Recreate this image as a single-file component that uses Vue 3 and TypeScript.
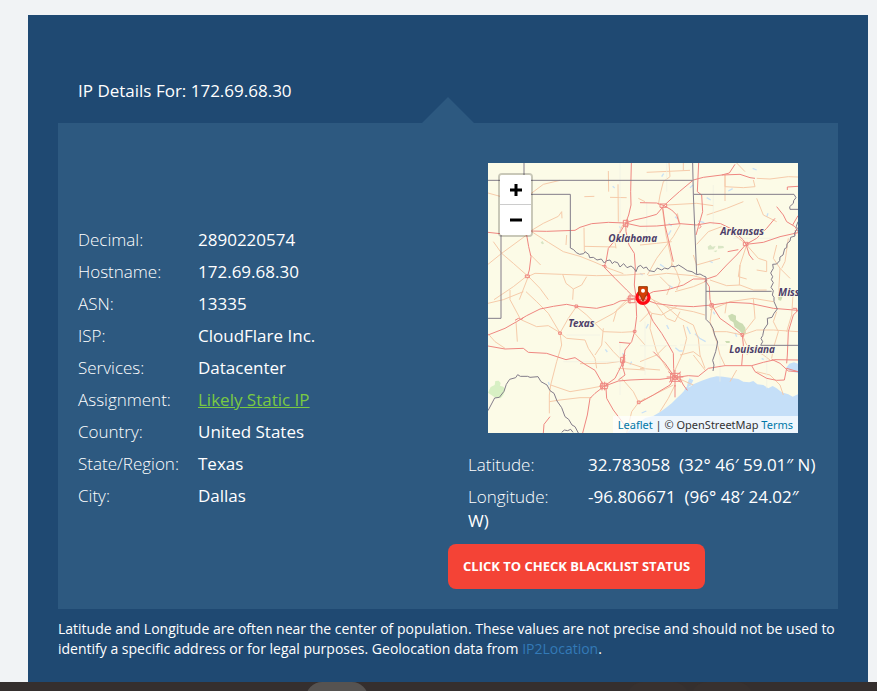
<script setup lang="ts">
import { ref } from 'vue'

interface Detail {
  label: string
  value: string
  href?: string
}

const ip = '172.69.68.30'

const details: Detail[] = [
  { label: 'Decimal', value: '2890220574' },
  { label: 'Hostname', value: ip },
  { label: 'ASN', value: '13335' },
  { label: 'ISP', value: 'CloudFlare Inc.' },
  { label: 'Services', value: 'Datacenter' },
  { label: 'Assignment', value: 'Likely Static IP', href: '#static-ip' },
  { label: 'Country', value: 'United States' },
  { label: 'State/Region', value: 'Texas' },
  { label: 'City', value: 'Dallas' },
]

const position: Detail[] = [
  { label: 'Latitude', value: '32.783058\u00a0 (32° 46′ 59.01″ N)' },
  { label: 'Longitude', value: '-96.806671\u00a0 (96° 48′ 24.02″ W)' },
]

const zoom = ref(5)
</script>

<template>
  <main class="page">
    <section class="card">
      <h1 class="title">IP Details For: {{ ip }}</h1>

      <div class="panel">
        <div class="col facts">
          <dl class="list">
            <div v-for="d in details" :key="d.label" class="row">
              <dt>{{ d.label }}:</dt>
              <dd>
                <a v-if="d.href" :href="d.href" class="static">{{ d.value }}</a>
                <template v-else>{{ d.value }}</template>
              </dd>
            </div>
          </dl>
        </div>

        <div class="col place">
          <div class="map">
            <svg class="tiles" viewBox="24 24 930 810" preserveAspectRatio="xMidYMid slice" aria-hidden="true">
              <rect x="24" y="24" width="930" height="810" fill="#fcfbe7" />

              <!-- Gulf, lakes and parks -->
              <path class="water" d="M480 800 L496 789 520 783 545 768 560 757 575 745 590 730 603 718 612 708 618 696 628 697 640 688 665 677 690 668 710 664 730 665 750 668 775 672 790 680 808 682 820 678 832 688 850 690 865 700 878 693 890 700 905 712 925 718 938 725 954 718 V834 H440 Z" />
              <path class="water" d="M918 640 l10-14 14-4 12 4 v28 l-18-4 z M628 670 l12 6 -8 16 -12 6 4-18 z" />
              <path class="lake" d="M376 583l6 8 M427 595l8 5 M455 620l-5 9 M586 578l12 10 10 0 M645 536l14 14 18 10 M621 515l10 22 M505 507l-7 13 M560 510l6 12 M565 240l8-14 M566 205l9 8 M585 185l8 6 M630 98l9-8 M545 65l6-9 M680 128l12 7 M655 198l18 5 M745 108l13-7 M818 40l12 5 M398 94l6 5 M418 214l5 7 M540 328l12 8 M565 390l13 8 M480 355l8 5 M208 690l-3-9 M485 774l14-6 M770 545l-5-12 M845 610l6 4 M688 318l10 5 M860 186l4-11 M700 470l4 8" />
              <path fill="#d8f0c4" d="M24 713 L32 696 44 690 46 678 56 677 62 684 60 692 70 695 76 702 70 720 62 730 46 728 34 720 Z" />
              <path fill="#cbdcb2" d="M744 482 l12-6 12 6 0 12 10 8 10 4 8 12 2 18 -10 2 -12-14 -12-8 -4-14 -10-6z M735 558h14v6h-10z M895 425l6-8 6 10-4 10-8-2z" />
              <path fill="#d9e6c5" d="M683 275l8-6 6 6 10-2 -6 10-16 1z M714 272l16 1 2 6-18 2z M700 288l12-2-4 6z M182 262l6-4 4 8-6 2z" />

              <!-- Secondary roads -->
              <g class="minor">
                <path d="M150 118 L190 88 240 76 M24 114 L60 124 M24 328 L65 295 140 240 M65 295 L40 260 M65 295 L100 325 142 362 M155 226 L190 205 235 184 245 170 246 190 M155 230 L205 262 250 290 300 304 345 322 372 334 M150 298 L182 330 M145 364 L165 355 245 358 350 362 440 360 495 356 M142 362 L100 395 42 434 M145 364 L118 434 M145 364 L180 400 205 434 M248 358 L258 385 280 402 278 434 M280 402 L305 390 320 365 M312 218 L313 290 M313 274 L408 276 M313 125 l30 -1 M390 127 L440 128 M414 88 L415 200 M385 48 L386 110 M428 210 L405 260 408 280 M260 240 L258 270 M475 130 L495 140 M440 255 L495 262 M372 335 L400 345 430 356" />
                <path d="M567 24 L570 65 550 80 540 120 535 150 M547 160 L558 240 576 320 574 335 M500 52 L630 46 M610 24 V46 M592 175 L600 210 580 245 560 270 530 310 502 360 M480 270 L530 265 575 260 M576 325 L590 350 600 380 590 405 M505 362 L560 355 640 362 675 372 M560 150 L650 145 700 152 M735 60 L735 138 M795 50 L770 24 M820 75 L825 95 790 98 735 95 735 60 M830 70 L870 72 925 65 954 66 M680 180 L740 160 790 140 M650 268 L685 230 725 215 M730 215 L800 268 M800 270 L835 310 860 318 860 350 830 345 M800 270 L780 330 778 390 M780 330 L775 365 800 372 M640 300 L650 330 720 310 M830 130 L850 180 890 200 M890 270 L880 310 900 340 930 370 M925 250 L915 320 905 340 M900 340 L895 430 M690 375 L740 392 780 390 820 405 860 405 M540 365 L570 395 560 420 M585 410 L640 395 680 378" />
                <path d="M90 405 L90 434 120 490 M24 445 L70 434 130 410 M138 410 L170 440 205 475 240 534 245 570 230 620 212 690 208 720 208 775 M24 536 L45 560 75 580 M108 500 L112 560 M125 495 L170 515 205 512 240 533 M240 534 L260 550 315 555 325 580 345 610 350 640 M289 455 L320 480 345 505 370 530 425 532 460 530 M345 505 L400 475 450 435 M240 534 L265 490 289 455 M300 626 L380 625 428 618 M212 690 L270 710 330 700 372 692 M208 740 L240 735 300 728 335 728 M375 560 L400 590 425 615 M400 500 L410 465 440 435 M428 618 L495 640 M460 530 L495 570 M476 742 L460 710 425 670 M476 742 L495 730 M440 834 L455 770 476 742 M415 640 L495 645 M370 520 L365 570 345 600" />
                <path d="M495 455 L515 475 545 480 570 465 590 455 M480 410 L520 435 560 455 640 470 675 480 M510 470 L480 500 M520 435 L560 490 585 500 600 470 M560 455 L600 490 640 510 655 550 660 600 675 640 M515 475 L510 520 530 590 560 640 583 660 M583 650 L610 590 620 550 610 510 M600 600 L640 590 660 605 M480 620 L530 600 560 570 M697 450 L690 500 710 560 720 600 735 632 M690 465 L750 440 820 430 880 440 M787 540 L800 570 850 600 870 615 M787 540 L740 530 700 530 M787 540 L830 525 880 525 954 530 M820 430 L825 490 790 535 M890 470 L880 500 895 530 880 580 875 610 M940 405 L935 480 920 530 M800 600 L830 570 M830 650 L870 660 900 690 910 720 M590 668 L640 690 M480 740 L540 710 580 690 M585 690 L565 730 540 770 M480 640 L540 645 M770 645 L750 680 M740 440 L735 475 M675 645 L640 600" />
              </g>
              <g class="trace">
                <path d="M420 24 V230 M500 140 V230 M260 540 H360 M560 24 V110 M700 90 V210 M760 250 H900 M420 560 V720 M480 572 H590 M600 570 H740 M720 600 V680 M860 570 V700 M250 620 H420 M495 500 V660" />
              </g>

              <!-- Interstates -->
              <g class="major">
                <path d="M24 232 L60 236 M150 228 L200 229 285 226 300 217 335 206 385 202 435 204 480 214 530 213 600 206 650 210 690 203 722 206 755 222 790 255 798 268 M798 268 L850 262 900 245 954 233" />
                <path d="M454 24 L452 110 453 150 446 180 437 204 438 230 447 270 463 295 466 340 463 390 468 425 M437 204 L410 250 385 280 378 320 372 336 405 370 440 405 460 425" />
                <path d="M437 204 L462 195 495 188 530 178 552 152 570 135 598 110 640 75 670 67 725 60 748 54 765 28 M480 143 L530 144 552 152 M552 152 L575 165 590 180 598 205 M656 24 L652 110 665 120 668 170 655 215 648 240 M548 156 L556 215 562 240 580 320" />
                <path d="M140 240 L146 275 153 305 148 345 143 362" />
                <path d="M798 268 L770 300 740 330 710 362 680 372 640 372 610 390 560 405 520 410 485 428 M798 268 L808 300 820 315 M798 268 L830 250 860 220 885 190 M675 375 L688 395 690 434 695 450 M743 290 L775 284" />
                <path d="M890 155 L910 180 920 200 945 215 954 230 M954 182 L938 210 M922 105 L922 96 954 94 M725 60 L780 58 810 68 825 70" />
                <path d="M24 540 L75 520 110 500 140 482 180 462 220 454 260 448 289 454 350 460 400 448 420 438 460 433 495 434 530 446 580 452 640 455 695 450 750 442 810 445 880 460 954 466 M695 450 L720 490 755 515 787 540 790 570 785 632" />
                <path d="M24 573 L75 582 130 580 145 592 200 595 258 614 285 608 315 628 345 646 370 690 M468 440 L470 485 464 530 455 560 435 585 430 620 415 650 405 670 372 694 M417 562 L450 565 M435 600 L425 625 435 660 415 675 M372 694 L415 678 450 675 495 673 540 673 580 668" />
                <path d="M372 694 L345 715 330 730 322 780 308 834 M378 700 L380 730 400 765 430 805 445 825 M190 834 L192 808 210 785" />
                <path d="M480 435 L500 460 520 500 545 535 560 560 580 595 581 640 583 665 M583 665 L555 625 520 590 M583 668 L625 662 655 664 685 640 735 632 815 632 850 622 885 614 954 615 M583 668 L570 690 520 720 480 742 M585 690 L585 727 M600 670 L610 690 622 706 M815 632 L825 650 860 670 890 676 913 675 920 640 954 650 M875 613 L900 625 925 648 954 650 M954 466 L940 480 925 530 922 600 920 625" />
              </g>
              <g class="city">
                <path d="M430 196h14v18h-14z M442 192v26 M540 147h20v10h-20z M655 205l8 10-6 6 M790 262h14v10h-14z M136 360h12v8h-12z M366 332h12v6 M285 450h8v8h-8z M236 531h8v7h-8z M460 526h8v6h-8z M105 496l10-6 10 4 6-8 M445 423h20v20h-20z M450 418v28 M440 430h26 M675 370l6 6-8 4 M690 446h10v10h-10z M783 536h8v8h-8z M422 607h12v16h-12z M430 598v36 M946 225v14 M938 460h12v10 M472 738h8v8h-8z" />
                <path d="M362 685h20v16h-20z M366 680v26 M358 693h28 M374 680v26 M572 655h28v24h-28z M560 666h50 M585 645v50 M565 650l38 32 M603 650l-36 32 M578 662h15v11h-15z" />
              </g>

              <!-- State lines -->
              <g class="border">
                <path d="M132 24 V60 M24 76 H637 M150 118 H271 V279 L281 284 289 293 299 298 311 296 315 290 326 298 329 308 340 307 351 315 364 312 373 324 380 317 390 315 397 326 403 320 413 323 420 336 431 326 441 338 453 333 462 340 468 350 474 335 482 331 490 340 499 336 507 347 523 350 532 339 545 345 554 339 564 342 574 334 586 335 596 330 609 338 622 347 636 350 650 359 660 357 671 363 678 366 V493 L690 505 699 520 704 540 713 561 707 590 698 616 702 630 699 648" />
                <path d="M638 24 L640 118 650 358 M640 118 H942 L948 128 941 137 940 145 929 155 930 163 H954 M678 409 H875 M63 240 V490 H24 M842 571 H954" />
                <path d="M954 200 L949 214 952 221 943 235 945 243 932 247 930 258 921 266 920 278 914 281 909 300 900 306 899 317 890 327 878 328 880 340 872 354 878 365 874 374 880 383 873 397 880 407 877 420 882 427 882 440 892 462 882 475 876 487 862 490 863 507 852 523 848 542 843 550 848 560 842 571" />
                <path d="M24 767 L44 729 58 727 72 709 79 688 89 673 107 668 113 659 121 664 143 664 150 667 174 665 183 680 201 690 210 707 222 715 231 738 245 758 255 785 266 793 276 810 285 815 295 834 M245 832 L253 825 263 827 272 823 279 832" />
              </g>

              <g class="names">
                <text x="385" y="260">Oklahoma</text>
                <text x="721" y="239">Arkansas</text>
                <text x="265" y="515">Texas</text>
                <text x="748" y="593">Louisiana</text>
                <text x="895" y="423">Miss</text>
              </g>

              <!-- Location marker -->
              <circle cx="489" cy="427" r="18" fill="#ff0000" fill-opacity=".35" stroke="#ff0a14" stroke-width="10" />
              <path d="M476 395 H502 V420 H498 L489 439 480 420 H476 Z" fill="#d63e05" stroke="#963b08" stroke-width="3" />
              <circle cx="489" cy="407" r="6" fill="#fff" />
            </svg>

            <div class="zoom">
              <button type="button" aria-label="Zoom in" @click="zoom++">
                <svg viewBox="0 0 12 12" aria-hidden="true"><path d="M6 0V12M0 6H12" /></svg>
              </button>
              <button type="button" aria-label="Zoom out" @click="zoom--">
                <svg viewBox="0 0 12 12" aria-hidden="true"><path d="M0 6H12" /></svg>
              </button>
            </div>

            <div class="credit">
              <a href="#leaflet">Leaflet</a> | © OpenStreetMap <a href="#terms">Terms</a>
            </div>
          </div>

          <dl class="list">
            <div v-for="d in position" :key="d.label" class="row">
              <dt>{{ d.label }}:</dt>
              <dd>{{ d.value }}</dd>
            </div>
          </dl>

          <button type="button" class="check">CLICK TO CHECK BLACKLIST STATUS</button>
        </div>
      </div>

      <p class="note">
        Latitude and Longitude are often near the center of population. These values are not
        precise and should not be used to identify a specific address or for legal purposes.
        Geolocation data from <a href="#ip2location">IP2Location</a>.
      </p>
    </section>

    <footer class="dock">
      <span class="tab active"></span>
      <span class="tab"></span>
      <span class="tab"></span>
    </footer>
  </main>
</template>

<style>
body {
  background: #f1f3f5;
}
</style>

<style scoped>
.page {
  padding-top: 15px;
  font-family: 'Open Sans', 'Noto Sans', sans-serif;
  color: #fff;
}

.card {
  margin: 0 9px 0 28px;
  padding: 64px 30px 23px;
  background: #1f4972;
}

.title {
  margin: 0 0 20px;
  padding: 0 20px;
  font-size: 17px;
  line-height: 24px;
  font-weight: 400;
}

.panel {
  position: relative;
  display: grid;
  grid-template-columns: 1fr 1fr;
  padding: 40px 0 20px;
  background: #2d5980;
}

.panel::before {
  content: '';
  position: absolute;
  left: 50%;
  bottom: 100%;
  width: 52px;
  height: 26px;
  margin-left: -26px;
  background: #2d5980;
  clip-path: polygon(50% 0, 100% 100%, 0 100%);
}

.facts {
  padding-top: 65px;
}

.list {
  display: flex;
  flex-direction: column;
  gap: 8px;
  margin: 0;
  padding: 0 20px;
  font-size: 17px;
  line-height: 24px;
}

dt {
  display: inline-block;
  width: 120px;
  font-weight: 300;
}

dd {
  display: inline;
  margin: 0;
}

.static {
  color: #7ac943;
}

.map {
  position: relative;
  height: 270px;
  margin: 0 40px 20px;
  overflow: hidden;
}

.tiles {
  display: block;
  width: 100%;
  height: 100%;
}

.water {
  fill: #c5dff8;
}

.lake {
  fill: none;
  stroke: #c9e1f5;
  stroke-width: 4;
}

.minor,
.major,
.city,
.border,
.trace {
  fill: none;
  stroke-linejoin: round;
}

.trace {
  stroke: #eef0e4;
  stroke-width: 2;
}

.minor {
  stroke: #f6cbaa;
  stroke-width: 3;
}

.major,
.city {
  stroke: #ef8781;
  stroke-width: 3;
}

.border {
  stroke: #837c8a;
  stroke-width: 3;
}

.names text {
  font-family: 'Noto Sans', sans-serif;
  font-size: 30px;
  font-weight: 700;
  font-style: italic;
  fill: #4e3f6a;
  stroke: #fcfbe7;
  stroke-width: 5;
  paint-order: stroke;
}

.zoom {
  position: absolute;
  top: 10px;
  left: 10px;
  border: 2px solid rgba(0, 0, 0, 0.2);
  border-radius: 4px;
  background-clip: padding-box;
}

.zoom button {
  display: flex;
  align-items: center;
  justify-content: center;
  width: 31px;
  height: 30px;
  padding: 0;
  border: 0;
  background: #fff;
  border-radius: 0 0 2px 2px;
  cursor: pointer;
}

.zoom button:first-child {
  border-bottom: 1px solid #ccc;
  border-radius: 2px 2px 0 0;
}

.zoom svg {
  width: 12px;
  height: 12px;
  fill: none;
  stroke: #000;
  stroke-width: 3;
}

.credit {
  position: absolute;
  right: 0;
  bottom: 0;
  padding: 0 5px;
  font-family: 'Noto Sans', sans-serif;
  font-size: 11px;
  line-height: 17px;
  color: #333;
  background: rgba(255, 255, 255, 0.7);
}

.credit a {
  color: #0078a8;
  text-decoration: none;
}

.check {
  margin-top: 11px;
  padding: 0 15px 2px;
  height: 45px;
  border: 0;
  border-radius: 8px;
  font-family: inherit;
  font-size: 13px;
  font-weight: 700;
  color: #fff;
  background: #f44336;
  cursor: pointer;
}

.note {
  margin: 10px 0 0;
  font-size: 14px;
  line-height: 20px;
}

.note a {
  color: #337ab7;
  text-decoration: none;
}

.dock {
  display: flex;
  justify-content: center;
  gap: 2px;
  height: 9px;
  padding-left: 181px;
  overflow: hidden;
  background: #352f2e;
}

.tab {
  width: 62px;
  height: 32px;
  border-radius: 16px;
  background: #38312f;
}

.tab.active {
  margin-right: 257px;
  background: #565351;
}
</style>
